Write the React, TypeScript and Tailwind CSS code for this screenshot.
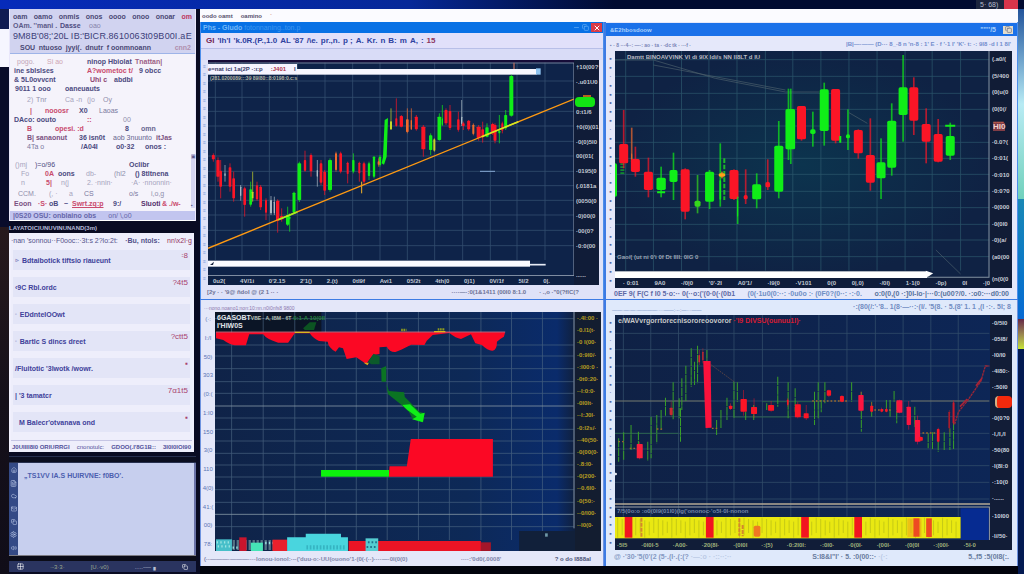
import React from "react";
import { X, Copy, Minus, Home, FileText, Cloud, Mail, Settings, Volume2, Grid2x2 } from "lucide-react";

type Cell = [string, string];
type Candle = [number, number, number, number, number, string, number?];

const R = "#fb1526";
const G = "#10ee18";
const Y = "#c8d62a";
const W = "#a9b9c4";
const O = "#f06a2c";

function Line({ cells, className = "" }: { cells: Cell[]; className?: string }) {
  return (
    <div className={"flex h-[9px] items-center whitespace-nowrap text-[7px] leading-[9px] " + className}>
      {cells.map(([text, cls], i) => (
        <span key={i} className={"shrink-0 " + cls}>{text}</span>
      ))}
    </div>
  );
}

function Gridlines({ xs, ys, box, color = "#3c5878" }: { xs: number[]; ys: number[]; box: [number, number, number, number]; color?: string }) {
  const [x0, y0, x1, y1] = box;
  return (
    <g stroke={color} strokeWidth="2.4" opacity="0.8">
      {xs.map((x) => <line key={"x" + x} x1={x} x2={x} y1={y0} y2={y1} />)}
      {ys.map((y) => <line key={"y" + y} x1={x0} x2={x1} y1={y} y2={y} />)}
    </g>
  );
}

function Candles({ data, width, wick = 3, round = 2 }: { data: Candle[]; width: number; wick?: number; round?: number }) {
  return (
    <g>
      {data.map(([x, hi, top, bottom, lo, c, w], i) => {
        const bw = w ?? width;
        return (
          <g key={i} fill={c}>
            <rect x={x - wick / 2} y={hi} width={wick} height={lo - hi} opacity="0.7" />
            <rect x={x - bw / 2} y={top} width={bw} height={bottom - top} rx={round} />
          </g>
        );
      })}
    </g>
  );
}

const trend: Candle[] = [
  [40, 460, 465, 478, 485, R, 9], [54, 472, 480, 530, 545, R, 10], [62, 480, 512, 560, 595, R], [75, 495, 520, 528, 545, W, 4], [90, 490, 502, 560, 575, R],
  [101, 515, 535, 595, 605, R], [122, 555, 560, 588, 602, W, 4], [134, 560, 565, 615, 650, R], [152, 545, 568, 614, 620, G, 8], [158, 515, 575, 595, 605, Y, 5],
  [171, 545, 556, 598, 602, R, 7], [182, 555, 560, 622, 630, R], [198, 595, 600, 638, 660, R, 6], [213, 588, 600, 640, 645, W, 6], [223, 590, 605, 640, 645, W, 4], [233, 598, 602, 662, 698, R, 10],
  [245, 625, 648, 658, 665, R, 10], [263, 620, 645, 674, 678, G, 10], [269, 640, 650, 658, 695, G, 4], [282, 575, 578, 638, 642, G, 9], [298, 485, 490, 600, 606, G, 11],
  [315, 452, 480, 512, 515, R, 7], [333, 460, 465, 514, 530, R, 8], [352, 480, 510, 530, 560, W, 4], [363, 480, 490, 548, 555, R, 8], [374, 510, 515, 572, 585, R], [390, 475, 480, 570, 575, G, 12],
  [408, 455, 460, 510, 515, O, 6], [422, 455, 460, 515, 520, R, 8], [443, 485, 488, 522, 550, R, 6], [460, 460, 480, 515, 520, G, 7], [478, 485, 488, 520, 545, R, 6],
  [492, 485, 490, 545, 555, R], [507, 485, 490, 528, 540, G, 7], [522, 468, 470, 530, 535, G, 7], [540, 465, 470, 495, 500, G, 7], [536, 475, 484, 494, 500, O, 6],
  [573, 325, 364, 388, 390, Y, 6], [589, 295, 355, 378, 380, R, 6], [604, 345, 348, 380, 382, R, 10], [622, 325, 358, 396, 400, O, 8],
  [634, 325, 360, 388, 390, O, 4], [649, 345, 350, 388, 392, R, 9], [670, 375, 380, 448, 470, R, 12], [692, 400, 406, 450, 465, G, 10],
  [703, 415, 418, 452, 455, Y, 6], [718, 340, 350, 420, 422, G, 11], [727, 315, 355, 375, 378, G, 4], [738, 325, 330, 370, 375, R, 9], [750, 315, 333, 384, 390, R, 8],
  [775, 335, 358, 390, 395, R, 7], [785, 300, 350, 372, 378, W, 4], [790, 365, 370, 378, 390, R, 8], [806, 360, 362, 388, 392, R, 9], [820, 370, 374, 402, 406, O, 6], [836, 375, 380, 414, 422, R, 12],
  [848, 365, 388, 412, 428, R, 8], [861, 370, 382, 410, 412, G, 10], [878, 368, 372, 400, 405, R, 10], [885, 370, 375, 422, 430, R, 9], [898, 345, 392, 400, 430, G, 6],
  [907, 365, 370, 392, 400, R, 6], [917, 330, 345, 385, 390, G, 9], [934, 224, 228, 347, 350, G, 12],
];

const bars: Candle[] = [
  [28, 470, 490, 590, 595, G, 16], [56, 330, 432, 490, 505, R], [80, 383, 460, 480, 485, O, 3], [91, 440, 477, 516, 530, R], [130, 473, 515, 570, 592, R],
  [168, 500, 533, 570, 592, G, 28], [205, 458, 510, 546, 600, G, 24], [240, 505, 508, 635, 658, R], [277, 525, 602, 620, 640, "#35d81c", 18], [313, 510, 515, 605, 627, G],
  [345, 430, 540, 600, 620, G, 5], [350, 515, 520, 530, 535, "#ffa31a", 20], [386, 508, 510, 597, 600, R], [397, 590, 600, 650, 672, G, 3], [421, 508, 585, 598, 612, R, 12],
  [454, 520, 553, 598, 625, G], [487, 478, 546, 562, 570, R, 14], [520, 363, 437, 575, 595, G], [549, 266, 327, 448, 480, G, 18], [556, 266, 327, 448, 492, G, 26], [588, 318, 318, 418, 422, R],
  [622, 335, 388, 402, 440, G, 16], [656, 248, 268, 393, 437, G], [690, 267, 267, 422, 430, R], [727, 328, 403, 415, 450, G, 12], [758, 388, 390, 460, 476, R],
  [794, 355, 465, 548, 572, R], [826, 415, 487, 535, 597, G], [858, 310, 362, 503, 527, G], [892, 165, 262, 345, 425, G], [924, 232, 262, 362, 405, R],
  [961, 325, 372, 425, 490, R], [997, 357, 402, 485, 487, R], [1033, 368, 408, 467, 480, G],
];

const thin: number[][] = [
  [41, 430, 500], [56, 412, 495], [78, 390, 465], [100, 410, 450], [128, 440, 497], [138, 365, 490], [155, 360, 445], [168, 345, 405], [181, 308, 362], [204, 262, 375],
  [222, 310, 370], [226, 340, 440], [230, 250, 345], [242, 212, 318], [258, 160, 275], [268, 200, 270], [277, 152, 265], [305, 165, 200], [334, 375, 420],
  [347, 345, 400], [365, 308, 375], [386, 260, 368], [396, 262, 320], [421, 350, 375], [445, 330, 375], [484, 325, 345], [517, 245, 335], [548, 262, 370],
  [569, 280, 350], [627, 290, 390], [638, 262, 370], [647, 315, 352], [658, 262, 325], [738, 262, 320], [767, 290, 410], [798, 320, 365], [842, 315, 350], [853, 315, 365],
  [865, 288, 320], [873, 320, 385], [927, 335, 395], [967, 415, 460], [980, 412, 462], [997, 440, 470], [1015, 412, 465], [1032, 400, 465], [1043, 380, 462],
];

const slim: Candle[] = [
  [104, 440, 447, 490, 493, "#f8203c", 18], [198, 320, 338, 360, 365, "#c92a30", 9], [282, 165, 180, 202, 210, "#c92a30", 5], [293, 160, 170, 196, 205, "#c92a30", 4], [376, 325, 332, 342, 345, R, 10],
  [415, 285, 312, 350, 362, R, 19], [446, 310, 336, 357, 368, R, 18], [497, 318, 330, 347, 350, R, 18], [547, 310, 314, 330, 335, R, 5], [577, 320, 328, 367, 370, R, 18],
  [602, 330, 355, 370, 375, R, 15], [670, 284, 286, 302, 306, R, 13], [709, 300, 303, 320, 322, R, 12], [766, 290, 300, 347, 350, "#fb1540", 16], [798, 322, 332, 350, 352, R, 9],
  [828, 338, 342, 350, 352, R, 8], [842, 338, 342, 350, 352, R, 8], [881, 314, 316, 353, 355, "#fb1540", 18], [909, 318, 335, 390, 404, "#fb1540", 13], [935, 362, 375, 440, 448, "#fb1540", 16],
  [945, 424, 426, 437, 440, R, 12], [997, 398, 402, 440, 442, R, 8], [1030, 345, 350, 400, 412, "#a81c2c", 5], [1043, 315, 322, 385, 390, "#c81c2c", 6],
];

function TrendPlot() {
  return (
    <svg className="block h-[216px] w-full" viewBox="24 180 1098 648" preserveAspectRatio="none" aria-label="Trend chart">
      <rect x="24" y="180" width="1098" height="648" fill="#0e2349" />
      <rect x="24" y="180" width="1098" height="8" fill="#160c38" />
      <Gridlines box={[24, 188, 1122, 780]} xs={[46, 126, 208, 292, 375, 458, 540, 622, 704, 788, 871, 951, 1035]} ys={[243, 292, 334, 378, 424, 468, 514, 557, 601, 645, 691, 737]} />
      <line x1="24" x2="1122" y1="189" y2="189" stroke="#6f7e98" strokeWidth="3" />
      <rect x="24" y="207" width="986" height="17" fill="#f7f7ff" />
      <rect x="1008" y="205" width="14" height="19" fill="#8ec3f0" />
      <line x1="942" x2="942" y1="188" y2="207" stroke="#b06a60" strokeWidth="4" />
      <Candles data={trend} width={8} />
      <polygon points="545,490 549,470 554,360 564,354 560,470 552,494" fill={G} />
      <line x1="485" x2="485" y1="545" y2="580" stroke="#f3b229" strokeWidth="3" />
      <line x1="840" x2="885" y1="514" y2="514" stroke="#86a9d4" strokeWidth="3" />
      <line x1="24" y1="745" x2="1122" y2="297" stroke="#ff9a12" strokeWidth="4" />
      <line x1="235" y1="659" x2="292" y2="636" stroke="#a5f020" strokeWidth="5" />
      <line x1="845" y1="410" x2="955" y2="365" stroke="#d5e820" strokeWidth="5" />
      <rect x="24" y="782" width="966" height="18" fill="#fbfbff" />
      <path d="M30 795 L42 785 L39 795 Z" fill="#15203c" />
      <line x1="990" x2="1037" y1="794" y2="794" stroke="#e6ebf5" strokeWidth="5" />
      <path d="M24 827 H1122 V189" stroke="#94a0b2" strokeWidth="3" fill="none" />
    </svg>
  );
}

function BarPlot() {
  return (
    <svg className="block h-[227px] w-full" viewBox="30 153 1122 681" preserveAspectRatio="none" aria-label="Candle chart">
      <defs>
        <radialGradient id="glow"><stop offset="0" stopColor="#0c344e" /><stop offset="1" stopColor="#0f2244" /></radialGradient>
      </defs>
      <rect x="30" y="153" width="1122" height="681" fill="url(#glow)" />
      <Gridlines color="#2f5c70" box={[30, 153, 1150, 812]} xs={[62, 145, 229, 311, 395, 480, 562, 646, 730, 814, 898, 979, 1064]} ys={[179, 229, 280, 328, 378, 427, 475, 523, 574, 623, 673, 720, 770]} />
      <path d="M30 180 H145 L330 235 L540 276 H640 M145 195 L540 270 M730 338 L785 370 M990 750 L1064 822" stroke="#4d616c" strokeWidth="2" fill="none" />
      <line x1="357" x2="357" y1="475" y2="600" stroke="#1cb82a" strokeWidth="6" strokeDasharray="14 5" />
      <line x1="52" x2="52" y1="490" y2="525" stroke="#128a30" strokeWidth="12" strokeDasharray="5 4" />
      <Candles data={bars} width={27} wick={5} round={5} />
      <path d="M156 577 h24 M1018 377 h30 M704 408 v20" stroke={G} strokeWidth="6" />
      <rect x="30" y="814" width="934" height="20" fill="#fff" />
      <path d="M960 812 L982 820 L970 828 L960 834 Z" fill="#fff" />
      <path d="M964 832 H1149 V153" stroke="#83919f" strokeWidth="3" fill="none" />
    </svg>
  );
}

function DepthPlot() {
  return (
    <svg className="block h-[239px] w-full" viewBox="45 51 1083 717" preserveAspectRatio="none" aria-label="Depth chart">
      <defs>
        <linearGradient id="depth" x1="0" x2="1" y1="0" y2="0"><stop offset="0" stopColor="#0f2348" /><stop offset="0.7" stopColor="#0d2957" /><stop offset="0.95" stopColor="#0a2b6b" /><stop offset="1" stopColor="#10203d" /></linearGradient>
      </defs>
      <rect x="45" y="51" width="1083" height="717" fill="url(#depth)" />
      <rect x="45" y="51" width="320" height="60" fill="#0b1526" />
      <Gridlines color="#4c6784" box={[45, 51, 1124, 735]} xs={[95, 190, 285, 377, 470, 563, 657, 750, 845, 937, 1030]} ys={[71, 150, 183, 221, 260, 295, 369, 403, 438, 475, 510, 546, 584, 622, 695]} />
      <path d="M45 333 H1124 M45 658 H1124" stroke="#8294a2" strokeWidth="2.5" />
      <path d="M48 112 V130 L70 135 Q90 150 105 151 H138 L148 118 H190 Q200 133 235 143 H265 L285 115 H330 Q340 130 358 138 L384 140 Q386 158 408 170 L418 157 L430 160 L441 192 L470 187 L500 207 L520 180 L540 177 V157 L562 155 Q570 172 588 171 L605 164 L635 149 L675 150 L682 137 L700 120 L750 114 Q770 130 785 132 L815 118 L828 145 L848 150 Q866 168 880 167 Q894 165 893 140 Q900 133 914 125 L918 112 Z" fill="#fb0824" />
      <path d="M48 111 H918" stroke="#ff8796" strokeWidth="2" />
      <path d="M285 112 H330 M704 110 H738" stroke="#d8b91c" strokeWidth="4" />
      <path d="M605 105 h16 M715 103 h22" stroke="#8e9b1f" strokeWidth="7" strokeDasharray="5 2" />
      <path d="M310 100 L330 82 H350 L343 105 H315 Z" fill="#0c5422" />
      <path d="M505 200 L522 176 L540 184 V208 H515 Z" fill="#0c5a2b" />
      <path d="M492 203 h16 l-4 8 Z" fill="#e0a81a" />
      <path d="M545 220 L560 213 V260 H546 Z M560 265 L568 288 L614 292 L616 306 L632 322 L660 350 L675 355 L672 380 L640 372 L628 350 L600 325 L565 297 Z" fill="#0b7423" />
      <path d="M608 330 L632 328 L662 356 L676 353 L670 382 L638 373 L652 365 L624 345 Z" fill={G} />
      <rect x="364" y="525" width="205" height="20" fill="#0df20d" />
      <path d="M568 545 L570 514 H622 L634 432 H881 V545 Z" fill="#fb0824" />
      <rect x="960" y="708" width="168" height="60" fill="#11203a" />
      <rect x="48" y="733" width="48" height="35" fill="#47bfc9" />
      <path d="M98 750 H262" stroke="#577285" strokeWidth="30" strokeDasharray="7 5" />
      <path d="M50 742 H94 M53 754 H94 M98 758 H118 M196 744 H220" stroke="#9be4e2" strokeWidth="7" strokeDasharray="4 7" />
      <rect x="118" y="727" width="22" height="41" fill="#c9152d" />
      <rect x="153" y="743" width="36" height="25" fill="#45e4b6" />
      <rect x="218" y="734" width="45" height="34" fill="#e9202c" />
      <path d="M262 768 V727 H318 V716 H424 V727 H445 V768 Z" fill="#49d5de" />
      <path d="M320 757 H438" stroke="#36b4c2" strokeWidth="13" strokeDasharray="5 5" />
      <rect x="447" y="738" width="398" height="30" fill="#eb1425" />
      <rect x="845" y="742" width="30" height="26" fill="#a31629" />
      <rect x="498" y="730" width="38" height="38" fill="#54cdd1" />
      <path d="M505 742 H534 M501 756 H532" stroke="#22718b" strokeWidth="6" strokeDasharray="5 6" />
      <rect x="1038" y="715" width="8" height="10" fill="#6f98a8" />
      <line x1="1125" x2="1125" y1="51" y2="700" stroke="#8795a4" strokeWidth="3" />
    </svg>
  );
}

const stripes = [70, 313, 598, 757];

function SwingPlot() {
  return (
    <svg className="block h-[225px] w-full" viewBox="30 60 1122 675" preserveAspectRatio="none" aria-label="Swing chart">
      <defs>
        <linearGradient id="swing" x1="0" x2="1" y1="0" y2="0"><stop offset="0" stopColor="#0f2145" /><stop offset="1" stopColor="#0d2656" /></linearGradient>
      </defs>
      <rect x="30" y="60" width="1122" height="675" fill="url(#swing)" />
      <Gridlines color="#3a5670" box={[30, 60, 1150, 665]} xs={[55, 137, 220, 305, 386, 471, 556, 640, 724, 809, 892, 975, 1057]} ys={[115, 164, 213, 262, 318, 365, 415, 462, 512, 562, 612]} />
      <path d="M30 318 H305 M915 318 H1150" stroke="#928c6c" strokeWidth="2" />
      <path d="M386 366 H556 M30 415 H220 M470 320 H620" stroke="#2d7448" strokeWidth="2" />
      <path d="M305 200 L386 260" stroke="#855844" strokeWidth="2" strokeDasharray="4 3" />
      <g stroke="#39a029" strokeWidth="3">
        {thin.map(([x, a, b]) => <line key={x} x1={x} x2={x} y1={a} y2={b} strokeDasharray="26 2" />)}
      </g>
      <path d="M40 440 h20 M74 460 h22 M155 402 h16 M320 400 h16 M620 318 h110 M795 345 h60 M950 414 h40" stroke="#9c6a2c" strokeWidth="4" strokeDasharray="5 6" />
      <Candles data={slim} width={12} wick={2} />
      <polygon points="294,198 316,198 319,398 301,399" fill="#fb123c" />
      <path d="M1046 388 L1058 350 L1084 318 L1125 258 L1138 213 H1150" stroke="#9a2637" strokeWidth="4" fill="none" strokeDasharray="8 2" />
      <path d="M1062 335 L1084 312 M1110 272 L1128 250" stroke="#a82437" strokeWidth="5" />
      <circle cx="32" cy="537" r="4" fill="#e5e9ef" />
      <path d="M30 627 H1152" stroke="#b4a994" strokeWidth="5" />
      <path d="M30 636 H1150 V735" stroke="#9ea2a7" strokeWidth="3" fill="none" />
      <rect x="1064" y="640" width="84" height="95" fill="#062b91" />
      <rect x="30" y="666" width="1034" height="64" fill="#e9e812" />
      <g stroke="#9aa31b" strokeWidth="2" opacity="0.65">
        {Array.from({ length: 76 }, (_, i) => <line key={i} x1={38 + i * 13.5} x2={38 + i * 13.5} y1={668 + (i % 4) * 4} y2={728 - (i % 3) * 7} />)}
      </g>
      {stripes.map((x) => <rect key={x} x={x - 11} y="666" width="23" height="62" fill="#f21520" />)}
      <path d="M109 668 V726 M402 670 V722 M412 690 V724" stroke="#d5862d" strokeWidth="6" strokeDasharray="12 3" />
      <rect x="445" y="692" width="20" height="33" rx="5" fill="#f07822" />
      <rect x="905" y="670" width="42" height="56" fill="#f1a617" opacity="0.6" />
      <rect x="923" y="670" width="18" height="55" fill="#ee4a22" />
      <rect x="961" y="670" width="17" height="56" fill="#ee4a22" />
    </svg>
  );
}

function Labels({ items, className }: { items: string[]; className: string }) {
  return (
    <div className={"flex flex-col whitespace-nowrap pl-[2px] text-[6px] font-bold " + className}>
      {items.map((t, i) => <span key={i} className="flex min-h-0 flex-1 items-center leading-none">{t}</span>)}
    </div>
  );
}

function TimeAxis({ items, className }: { items: string[]; className: string }) {
  return (
    <div className={"flex items-center justify-between whitespace-nowrap text-[6px] leading-none font-bold " + className}>
      {items.map((t, i) => <span key={i}>{t}</span>)}
    </div>
  );
}

function Ruler({ items, className }: { items: string[]; className: string }) {
  return (
    <div className={"flex shrink-0 flex-col items-center justify-between overflow-hidden py-1 leading-none " + className}>
      {items.map((t, i) => <span key={i}>{t}</span>)}
    </div>
  );
}

const ticks = ["▪", "▪", "·", "▪", "▪", "•", "▪", "▪", "·", "▪", "•", "▪", "▪", "·", "▪", "▪", "•", "▪", "▪", "·", "▪", "▪", "•", "▪", "▪", "▪"];
const faint = ticks.map(() => "≡");

const N = "text-[#4c4a80] font-bold";
const P = "text-[#c94a6d] font-bold";
const F = "text-[#a5a3bd]";

const rows: { cells: Cell[]; className?: string }[] = [
  { cells: [["pogo.", "w-[30px] ml-[7px] text-[#c2a6b8]"], ["Si  ao", "w-[40px] text-[#cfa6b2]"], ["ninop Hbiolat", "w-[48px] " + N], ["Tnattan|", "text-[#9c5f85] font-bold"]] },
  { cells: [["ine sblslses", "w-[73px] ml-1 " + N], ["A?wometoc t/", "w-[52px] " + P], ["9 obcc", N]] },
  { cells: [["& 5L0ovvcnt", "w-[76px] ml-1 " + N], ["Uhi  c", "w-[24px] text-[#8c4470] font-bold"], ["abdbi", N]] },
  { cells: [["9011 1 ooo", "w-[50px] ml-[5px] " + N], ["oaneuauts", N]] },
  { cells: [["2)", "w-[9px] ml-[17px] " + F], ["Tnr", "w-[29px] text-[#8f8eac]"], ["Ca -n", "w-[22px] " + F], ["(jo", "w-[16px] " + F], ["Oy", "text-[#8f8eac]"]], className: "mt-[2px]" },
  { cells: [["|", "w-[15px] ml-[20px] " + P], ["nooosr", "w-[34px] " + P], ["X0", "w-[20px] " + N], ["Laoas", "text-[#7a78a0]"]], className: "mt-[2px]" },
  { cells: [["DAco: oouto", "w-[73px] ml-1 " + N], ["::", "w-[36px] " + P], ["00", "text-[#8f8eac]"]] },
  { cells: [["B", "w-[28px] ml-[17px] " + P], ["opesi. :d", "w-[70px] " + P], ["8", "w-[16px] " + N], ["omn", "text-[#66648f] font-bold"]] },
  { cells: [["B| sanaonut", "w-[52px] ml-[17px] text-[#7a5080] font-bold"], ["36 isn0t", "w-[34px] " + N], ["aob 3nuunto", "w-[43px] text-[#66648f]"], ["itJas", "text-[#7a5080] font-bold"]] },
  { cells: [["4Ta   o", "w-[54px] ml-[17px] text-[#7a78a0]"], ["/A04I", "w-[35px] " + N], ["o0·32", "w-[29px] " + N], ["onos :", N]] },
  { cells: [["()mj", "w-[20px] ml-[5px] " + F], [")=o/96", "w-[94px] text-[#4c4a80]"], ["Oclibr", N]], className: "mt-[9px]" },
  { cells: [["Fo", "w-[24px] ml-[11px] " + F], ["0A", "w-[13px] " + P], ["oons", "w-[28px] " + N], ["db-", "w-[28px] " + F], ["(hl2", "w-[21px] text-[#8f8eac]"], ["() 8tltnena", N]] },
  { cells: [["n", "w-[25px] ml-[11px] " + F], ["5|", "w-[15px] " + P], ["n(j", "w-[26px] " + F], ["2. ·nnin·", "w-[44px] " + F], ["·A·  ·nnonnin·", F]] },
  { cells: [["CCM.", "w-[31px] ml-[8px] text-[#8f8eac]"], ["(,  ·", "w-[20px] " + F], ["a", "w-[15px] " + F], ["CS", "w-[45px] text-[#7a78a0]"], ["o/s", "w-[22px] text-[#7a78a0]"], ["i,o,g", "text-[#8f8eac]"]], className: "mt-[2px]" },
  { cells: [["Eoon", "w-[24px] ml-1 text-[#7a5080] font-bold"], ["·S·", "w-[11px] " + P], ["oB", "w-[15px] " + N], ["~", "w-[8px] " + N], ["Swrt.zq:p", "w-[41px] underline " + P], ["9:/", "w-[28px] " + N], ["Sluoti", "w-[21px] text-[#54306b] font-bold"], ["& ./w-", P]], className: "mt-[1px]" },
];

const messages: { mark: string; text: string; tag: string; indent: string }[] = [
  { mark: "⊳", text: "Bdtaibotick tiftsio riaueunt", tag: "꞉8", indent: "" },
  { mark: "", text: "‹9C Rbl.ordc", tag: "?4t5", indent: "" },
  { mark: "▫", text: "EDdntelOOwt", tag: "", indent: "" },
  { mark: "▫", text: "Bartlc S dincs dreet", tag: "?ctt5", indent: "" },
  { mark: "", text: "/Fluitotic '3lwotk /wowr.", tag: "▪", indent: "" },
  { mark: "", text: "| '3 tamatcr", tag: "7α1t5", indent: "" },
  { mark: "", text: "M  Balecr'otvanava ond", tag: "▪", indent: "pl-1" },
];

function LeftColumn() {
  return (
    <aside className="flex w-[200px] shrink-0 bg-[#090b22]">
      <div className="flex w-[9px] shrink-0 flex-col">
        <div className="h-5 bg-[#101b52]" />
        <div className="h-[38px] bg-[#f6f6ff]" />
        <div className="h-40 bg-[#090c2b]" />
        <div className="flex-1 bg-linear-to-b from-[#27191d] via-[#15101a] to-[#100d18]" />
      </div>
      <div className="flex min-w-0 flex-1 flex-col pr-1">
        <section className="border-x border-[#e9e7fb] bg-[#d1d3f0]">
          <nav className="flex h-[12px] items-center justify-between px-[3px] pt-[2px] text-[7px] leading-none font-bold text-[#4a4874]">
            {["oam", "oamo", "onmis", "onos", "oooo", "onoo", "onoar"].map((t, i) => <button key={i} type="button">{t}</button>)}
            <button type="button" className="text-[#bd3560]">om</button>
          </nav>
          <Line cells={[["OAm. ''mani .", "w-[47px] ml-[3px] text-[#5c5a88] font-bold"], ["Dasse", "w-[29px] " + N], ["oao", "text-[#8583ab]"]]} />
          <div className="flex h-[12px] items-center justify-between px-[3px] text-[9px] leading-none whitespace-nowrap text-[#3c4078]">
            {["9M8", "B'08;'", "20L I", "B:'BIC", "R.86", "10", "06", "3t0", "9B", "00I", ".a", "E"].map((t, i) => <span key={i}>{t}</span>)}
          </div>
          <div className="flex h-[11px] items-center justify-between px-[10px] pr-1 text-[7px] leading-none font-bold whitespace-nowrap text-[#4a4874]">
            {["SOU", "ntuoso", "jyyi(.", "dnutr", "f oonmnoann"].map((t, i) => <span key={i}>{t}</span>)}
            <span className="pl-5 text-[#b08fae]">cnn2</span>
          </div>
          <div className="flex border-t border-[#9eb4e8] bg-[#f5f3fb] pt-[3px] pb-[3px]">
            <div className="min-w-0 flex-1">
              {rows.map((r, i) => <Line key={i} cells={r.cells} className={r.className} />)}
            </div>
            <div className="mt-[97px] flex w-1 shrink-0 flex-col justify-between bg-[#d5d4f1] text-[5px] leading-none text-[#59578c]">
              <span>▣</span><span>▪</span>
            </div>
          </div>
          <div className="flex h-[10px] items-center gap-3 border-b border-white bg-[#c2c5ef] px-[3px] text-[7px] leading-none font-bold whitespace-nowrap text-[#6666a9]">
            <span>|0S20 OSU: onblaino obs</span><span className="font-normal">on/ \,o0</span>
          </div>
        </section>
        <div className="flex h-[12px] items-end pb-px text-[6px] leading-[7px] font-bold whitespace-nowrap text-[#b8bbd8]">LAYATOICIUNUVINUNAND(3m)</div>
        <section className="mr-[2px] border-x-2 border-[#f1f0fd] bg-[#eeeefb]">
          <div className="flex h-[14px] items-center justify-between text-[7px] leading-none whitespace-nowrap text-[#53528a]">
            <span>·nan 'sonnou··F0ooc::·3t:s 2?lo:2t:</span><span className="font-bold">·Bu, ntols:</span><span className="text-[#94335f]">nn\x2l·g</span>
          </div>
          <ul className="flex flex-col gap-[7px] px-[2px] pt-[3px] pb-[8px]">
            {messages.map((m, i) => (
              <li key={i} className="flex h-5 items-start justify-between bg-[#e3e5f7] px-[2px]">
                <a href="#" className={"flex items-center gap-[3px] self-center text-[7px] leading-none font-bold whitespace-nowrap text-[#40419a] " + m.indent}>
                  {m.mark && <span className="text-[5px] text-[#8d8fc4]">{m.mark}</span>}{m.text}
                </a>
                <span className="pt-[2px] text-[8px] leading-none text-[#a8436e]">{m.tag}</span>
              </li>
            ))}
          </ul>
          <div className="flex h-[12px] items-center justify-between border-t border-[#c5c5e4] px-px text-[6px] leading-none font-bold whitespace-nowrap text-[#51509a]">
            <span>J0UIIII8I0 ORIURRGI</span><span className="font-normal">cnonotulc:</span><span>GDOO(.I'8G1B::</span><span>3I0I0IOI90</span>
          </div>
        </section>
        <div className="mt-1 h-[7px] border-y border-[#27304f] bg-[#0b0e20]" />
        <section className="flex flex-1 border-r-2 border-[#6a73a8]">
          <div className="flex w-[9px] shrink-0 flex-col items-center justify-between bg-[#344a86] py-1 text-[#c7d2ef]">
            <Home size={6} /><FileText size={7} /><Cloud size={6} /><Mail size={6} /><Copy size={6} /><Settings size={7} /><Volume2 size={6} />
          </div>
          <textarea aria-label="Notes" defaultValue={"„TS1VV IA.S HUIRVNE: f0BO'."} className="min-w-0 flex-1 resize-none bg-[#c7cfee] px-[6px] pt-2 text-[7px] leading-[10px] font-bold text-[#4b5eae] outline-none" />
        </section>
        <div className="h-[6px] border-t border-[#7c7b83] bg-[#0b0c18]" />
        <footer className="mb-[2px] flex h-[11px] items-center justify-between bg-[#2a3460] px-2 text-[6px] leading-none text-[#9aa78f]">
          <Grid2x2 size={7} className="text-white" /><span>·-3·3·</span><span>[U.·v0)</span><span className="text-[#b8bfd2]">.....-—▗</span><Copy size={6} className="text-white" />
        </footer>
      </div>
    </aside>
  );
}

export default function App() {
  return (
    <div className="flex min-h-screen flex-col bg-[#03071b] font-['Liberation_Sans',Arial,sans-serif]">
      <header className="flex h-[9px] shrink-0 items-center justify-end bg-linear-to-r from-[#062bba] via-[#062898] via-40% to-[#010b31] to-60% pr-[6px]">
        <span className="flex h-full w-[28px] items-center bg-[#1b243d] pl-1 text-[7px] leading-none text-[#b5bdcc]">5· 68)</span>
        <span className="h-full w-[14px] bg-[#d8354b]" />
      </header>
      <div className="flex flex-1">
        <LeftColumn />
        <main className="flex min-w-0 flex-1 flex-col bg-[#3d7be4]">
          <nav className="flex h-[13px] shrink-0 items-center gap-2 bg-[#fbfbff] px-[2px] text-[6px] leading-none font-bold text-[#57506d]">
            <button type="button">oodo oamt</button><button type="button">oamino</button><span className="text-[#d8a08e]">ˊ</span>
          </nav>
          <div className="grid grid-cols-[404fr_412fr] gap-x-[2px]">
            <section className="flex flex-col border-x border-[#4d8eea] bg-[#dfe2f8]">
              <div className="flex h-[11px] items-center justify-between bg-[#0871e5] pr-px pl-[2px] text-[7px] leading-none text-[#75b9f8]">
                <span className="font-bold">Phs - Gludo <span className="font-normal text-[#3f97ef]">fotonnaning..ton.p</span></span>
                <span className="flex items-center gap-[2px]"><Minus size={7} /><Copy size={7} />
                  <button type="button" aria-label="Close" className="flex h-[9px] w-[11px] items-center justify-center bg-[#d83b48] text-white"><X size={8} strokeWidth={3} /></button>
                </span>
              </div>
              <div className="flex h-[16px] items-center gap-[3px] border-b border-[#b8bfe8] bg-[#e1e0fa] px-[5px] text-[8px] leading-none font-bold whitespace-nowrap text-[#2e429f]">
                <span className="text-[#722554]">GI</span>
                {["'lh'I", "'k.0R.(P.,1.0", "AL '87", "/\\e.", "pr.,n.", "p ;", "A.", "Kr.", "n", "B:", "m", "A,", ":"].map((t, i) => <span key={i}>{t}</span>)}
                <span className="text-[#8d3760]">15</span>
              </div>
              <div className="h-[11px] bg-[#d9dcf7]" />
              <div className="flex pr-1">
                <Ruler items={faint} className="w-[7px] text-[5px] text-[#7c9ad8]" />
                <div className="relative min-w-0 flex-1 bg-[#0e2144]">
                  <TrendPlot />
                  <TimeAxis items={["0u2(", "4V/1i", "0'2.15", "2'1()", "2.(t)", "0tl9f", "Avi1", "05/2t", "4th|0", "0)1)", "0V/1f", "5I/2", "0|."]} className="h-[9px] pr-6 pl-[5px] text-[#c0c8d5]" />
                  <div className="absolute top-[4px] left-0 flex w-[89px] gap-2 bg-[#f5f4ff] text-[6px] leading-[10px] font-bold whitespace-nowrap text-[#373a69]">
                    <span>e=nat ici 1a(2P ·:ı:p</span><span className="text-[#af3349]">:J401</span><span>I</span>
                  </div>
                  <span className="absolute top-[15px] left-[2px] text-[5px] leading-[6px] font-bold text-[#b5b6a5]">(281.0200089:::39 89I80::8:0198:0.c:s</span>
                </div>
                <div className="relative flex w-[25px] shrink-0 flex-col bg-[#101c38] text-[#c2c7d0]">
                  <Labels className="h-[193px]" items={["†10(00?", "·.u01U0", "", "0:t1/6", "†0(0)(01", "·0(0)5I0", "00(01(", "·0195(0", "(.0181a", "(0050(0", "·0)00(0", "·00(0?", "·0:0(00"]} />
                  <Labels className="mt-4 h-3" items={["......"]} />
                  <span className="absolute top-[35px] left-[9px] h-1 w-2 bg-[#b9641b]" />
                  <span className="absolute top-[37px] left-px h-[10px] w-5 rounded-sm bg-[#12e414]" />
                </div>
              </div>
              <div className="flex h-[13px] items-center justify-between pr-6 pl-[6px] text-[6px] leading-none font-bold whitespace-nowrap text-[#6d7295]">
                <span>[2y · · '9@ ñdoI @ (2 1 ·· ·</span><span className="pl-40">····—·:0(1&amp;1411 (00I0 8:1.0</span><span>· .,o ·"0(?fIC(?</span>
              </div>
            </section>

            <section className="flex flex-col border-r border-[#4d8eea] bg-[#e5e8fa] pt-px">
              <div className="flex h-[13px] items-center justify-between bg-[#1b71e9] pr-1 pl-1 text-[7px] leading-none font-bold text-[#a9d0fb]">
                <span className="text-[6px]">&amp;E2hbosdoow</span>
                <span className="flex items-center gap-[7px]"><span>""''/5</span>
                  <button type="button" aria-label="Restore" className="flex h-[8px] w-[10px] items-center justify-center bg-[#e4dccb] text-[#59617e]"><Copy size={7} /></button>
                </span>
              </div>
              <div className="flex h-[15px] items-center justify-between gap-3 px-1 text-[6px] leading-none font-bold whitespace-nowrap text-[#738dcd]">
                <span className="pt-1 text-[5px] text-[#7a85b6]">▪  · 8 ···4··: —·: ao · ta · ·dc tk · ···f ·</span><span className="pr-[2px]">|B|—·—— (D··· 8_·8 n 'n·8 : 1' E · f '·1 I' 'K'· t: ·: 9I8 ·d I 1 8I'</span>
              </div>
              <div className="flex pr-[5px]">
                <Ruler items={ticks} className="w-[9px] text-[7px] text-[#5268a8]" />
                <div className="relative min-w-0 flex-1 bg-[#0f1d3b]">
                  <BarPlot />
                  <TimeAxis items={["· 0:01", "9A0", "·/0|0", "'0'·2I", "A0'1/", "·I9(0", "·V101", "0(0", "0|,0)", "·/0I)", "1·1(0", "·0p)", "0I", "·|0"]} className="h-[10px] pl-[8px] text-[#c2c9d4]" />
                  <span className="absolute top-[3px] left-3 text-[6px] leading-[7px] font-bold whitespace-nowrap text-[#b9bbc3]">Damtt BINOAVVINK VI di 9IX ldi/s NN II8LT d IU</span>
                  <span className="absolute top-[203px] left-[2px] text-[6px] leading-[7px] font-bold whitespace-nowrap text-[#9da3b5]">Gao/( (ut ni 0'i 0f Dt IIII: 0IG 0</span>
                </div>
                <div className="relative flex w-[22px] shrink-0 flex-col bg-[#111c36] text-[#c8ccd6]">
                  <Labels className="h-[214px]" items={["(.a0/(", "(5/400", "(0(u(0", "(0(0(/", "", "·0.0?(", "·0:01(", "·0:010", "·0:0?0", "·0(000", "·0(0I0", "·0)(a/", "(a0(00"]} />
                  <Labels className="mt-2 h-3" items={["(n(0(0"]} />
                  <span className="absolute top-[68px] left-[3px] text-[5px] leading-none text-[#b2574b]">▄▄▄</span>
                  <span className="absolute top-[72px] left-[3px] bg-[#813d46] text-[8px] leading-[8px] font-bold text-[#efd0cd]">HI0</span>
                </div>
              </div>
              <div className="flex h-[11px] items-center justify-between px-2 text-[7px] leading-none font-bold whitespace-nowrap text-[#6d8ec4]">
                <span className="text-[#5d69a5]">0EF 9( F(C f I0 5·o:·· 0(··o:('(0·0(·(0b1</span><span>(0(·1u0(0:··: ·0u0o :· (0F0?(0··: ·:·0.</span><span className="text-[#56729c]">o:0(0,(0 ·:]0I-lo·|···0:(u00?/0. ·:o0:···d0:00</span>
              </div>
            </section>
          </div>

          <div className="mt-px grid grid-cols-[404fr_412fr] gap-x-[2px]">
            <section className="flex flex-col border-x border-[#6e93df] bg-[#e4e7f9]">
              <div className="flex h-[12px] items-center px-[3px] pt-1 text-[5px] leading-none text-[#8c77ae]">···nono.noano1:non:10:nn.n0i0nfs8 9800</div>
              <div className="flex pr-[2px]">
                <Ruler items={["(·:", "I:/I", "50)", "303", "(0:(", "1:I0", "150", "3(0", "110", "4(0)", "41:(", "00)", "78:"]} className="w-[14px] text-[6px] text-[#5a75b5]" />
                <div className="relative min-w-0 flex-1">
                  <DepthPlot />
                  <div className="absolute top-[2px] left-[2px] text-[7px] leading-[8px] font-bold whitespace-nowrap text-[#e0e4e8]">
                    <div>6GASOBT<span className="text-[5px] text-[#b7c0b4]">VBE · A, IBM · 6T</span> <span className="text-[6px] text-[#24813a]">0:1·A 10(0II</span></div><div>I'HIW0S</div>
                  </div>
                </div>
                <Labels className="w-[26px] shrink-0 bg-[#131d30] pb-5 text-[#b79c22]" items={["·.4I:00 ·", "·0.I1(t·", "·0 I(00·", "·0:9I0/·", "·:I00:0 ·", "·0t0:20·", "··I:0:0·", "·0I0It·", "··I:J0I·", "·0:I2s/·", "··40(50·", "·0(00(0·", "·.8:I0·", "·0(200·", "··0.6I0·", "·0(50:·", "··0/I00·", "··I0(0·"]} />
              </div>
              <div className="flex h-[15px] items-center justify-between pr-3 pl-[3px] text-[6px] leading-none font-bold whitespace-nowrap text-[#8086aa]">
                <span>(··———·———····lonou·ionol:·-·('duu·o:·UU(ouono'1·(0(·(··)····—·0I(0(0)</span><span>····:'0d0(.0008'</span><span className="text-[#4c5578]">? o do I888al</span>
              </div>
            </section>

            <section className="flex flex-col border-r border-[#6e93df] bg-[#dfe9fb]">
              <div className="flex h-[15px] items-start justify-between px-[6px] pt-[3px] text-[7px] leading-none whitespace-nowrap text-[#718cc2]">
                <span className="pt-[5px] text-[5px]">——·—·—·————····——:·-·:—···——</span><span className="font-bold">·:(80(/:'·'8.. 1(8·—··:·(I/. '5(8. · 5.(8' 1. 1 ,(I ·:·. 5I; 8</span>
              </div>
              <div className="flex pr-[5px]">
                <Ruler items={ticks} className="w-[9px] text-[7px] text-[#5268a8]" />
                <div className="relative min-w-0 flex-1 bg-[#111d38]">
                  <SwingPlot />
                  <TimeAxis items={["·5I5", "·0I0I·5", "·A00·", "·20(8I·", "·(0I0I", "·:(5)", "·0:2I0I:", "·:0I0·", "·0(0I·", "·(00I·", "·(0(0I", "·:(00I·", "·5I·0", ""]} className="h-[10px] pl-[2px] text-[#9eb07b]" />
                  <span className="absolute top-[2px] left-[3px] text-[7px] leading-[8px] font-bold whitespace-nowrap text-[#c6c8c7]">e/WAVvrgorrtorecnisororeoovoror <span className="text-[#d51d34]">·'I9 DIVSU(ounuu1I)·</span></span>
                  <span className="absolute top-[193px] left-[2px] text-[6px] leading-[7px] font-bold whitespace-nowrap text-[#7585a6]">7/5(0o:o :o0(0I9(01I0)(Ig('ononoc·'o5I·0I·nonon</span>
                </div>
                <div className="relative flex w-[22px] shrink-0 flex-col bg-[#121d37] text-[#cad2de]">
                  <Labels className="h-[191px]" items={["·0/5I0", "·05I8/", "·I0/I0", "·4I80:·", "·:50I0", "", "·0(0?0", "·I,/I,/I", "·50(80", "·I(8I:0", "·:10(0", "·......"]} />
                  <Labels className="h-10" items={["·10I00", "·I//50·"]} />
                  <span className="absolute top-[81px] left-[5px] h-3 w-[17px] rounded-sm border-l-2 border-[#d5b082] bg-[#f3290c]" />
                </div>
              </div>
              <div className="flex h-[16px] items-center justify-between px-2 pb-1 text-[7px] leading-none font-bold whitespace-nowrap text-[#8398c2]">
                <span>@ ·'30·'5(0'(2 (5·.(I·.(:(? <span className="text-[#bccbe6]">·—:o · ·::··:··</span></span><span className="text-[#687b9d]">S:I8&amp;I"I' · 5. :0(00::· <span className="text-[#bccbe6]">·(·:</span></span><span className="text-[#687b9d]">5.,f5 :5(0I8(:.</span>
              </div>
            </section>
          </div>
          <div className="min-h-[6px] flex-1 bg-[#01030c]" />
        </main>
        <div className="w-[6px] shrink-0 bg-[#031a52]">
          <div className="h-[190px] bg-linear-to-b from-[#23549b] via-[#b8ebf4] to-[#70d1bc]" />
          <div className="h-[120px] bg-linear-to-b from-[#1a88b5] to-[#096ad3]" />
          <div className="h-[30px] bg-linear-to-b from-[#652746] to-[#c6e432]" />
        </div>
      </div>
    </div>
  );
}
